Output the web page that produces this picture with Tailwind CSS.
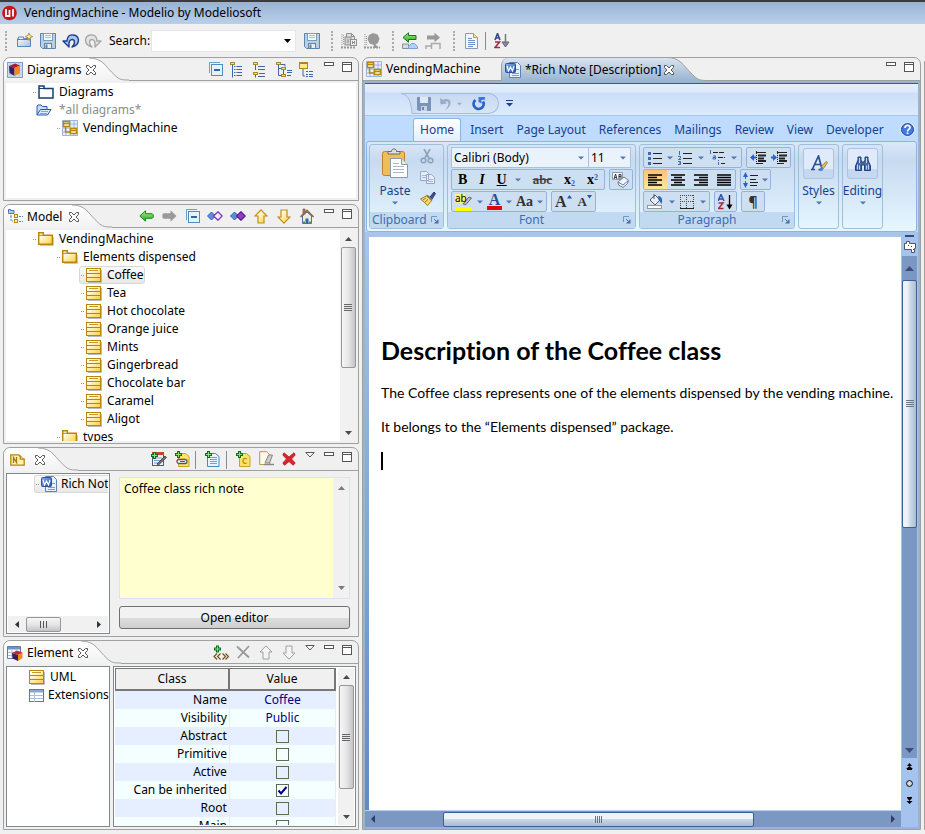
<!DOCTYPE html>
<html lang="en">
<head>
<meta charset="utf-8">
<title>VendingMachine - Modelio by Modeliosoft</title>
<script src="https://cdn.jsdelivr.net/npm/@tailwindcss/browser@4"></script>
</head>
<body class="flex h-screen min-h-[600px] flex-col overflow-hidden bg-[#f0f0f0] font-['Noto_Sans','Open_Sans',sans-serif] text-[12px] leading-[18px] text-black">

<!-- Icon library -->
<svg class="absolute h-0 w-0" aria-hidden="true">
  <defs>
    <linearGradient id="gy" x1="0" y1="0" x2="1" y2="1"><stop offset="0.2" stop-color="#fffdf0"/><stop offset="1" stop-color="#fcd03c"/></linearGradient>
    <linearGradient id="gb" x1="0" y1="0" x2="1" y2="1"><stop offset="0" stop-color="#fff"/><stop offset="1" stop-color="#9fc0ee"/></linearGradient>
    <linearGradient id="gt" x1="0" y1="0" x2="0" y2="1"><stop offset="0" stop-color="#fff"/><stop offset="1" stop-color="#f2f2f2"/></linearGradient>
    <linearGradient id="gtb" x1="0" y1="0" x2="0" y2="1"><stop offset="0" stop-color="#dbe4ef"/><stop offset="1" stop-color="#99b4d1"/></linearGradient>
    <linearGradient id="gg" x1="0" y1="0" x2="0" y2="1"><stop offset="0" stop-color="#a8f08a"/><stop offset="1" stop-color="#22a822"/></linearGradient>
    <linearGradient id="gw" x1="0" y1="0" x2="1" y2="1"><stop offset="0" stop-color="#8ab4f0"/><stop offset="1" stop-color="#1e4fa8"/></linearGradient>
  </defs>
  <symbol id="i-close" viewBox="0 0 12 12"><path d="M1.5 1.500h2L6 4l2.500-2.500h2v2L8 6l2.500 2.500v2h-2L6 8l-2.500 2.500h-2v-2L4 6 1.500 3.500z" fill="#fff" stroke="#555" stroke-width="1"/></symbol>
  <symbol id="i-new" viewBox="0 0 16 16"><path d="M.5 13.500V5.500h1V4h5v1.500h7v8z" fill="url(#gb)" stroke="#5b84b8"/><path d="M1 6.500h12" stroke="#5b84b8"/><path d="M12 0l1 2.500L15.800 3.600 13 4.700 12 7.500l-1-2.800-2.700-1.100L11 2.500z" fill="#fff8c0" stroke="#c09018"/></symbol>
  <symbol id="i-save" viewBox="0 0 16 16"><path d="M.5.500h15v15H2.500l-2-2z" fill="#b9cfe6" stroke="#5f84ad"/><rect x="3.500" y=".5" width="9" height="7" fill="#f4f8f4" stroke="#7b9cc0"/><path d="M5 2.500h6M5 4.500h6" stroke="#b8c8b0"/><rect x="4.500" y="10.500" width="7" height="5" fill="#eee" stroke="#5f84ad"/><rect x="5.500" y="11.500" width="2" height="3.500" fill="#5f84ad"/></symbol>
  <symbol id="i-undo" viewBox="0 0 18 16"><path d="M1 8l6 6v-3.500C7 6 12 5 12.500 9c.2 2-.8 3.500-2.500 5 4-1 6.500-3.500 6.500-7C16 1 7 0 5.500 5.500L5 8z" fill="#a9c6f2" stroke="#1f3f8f" stroke-width="1.400" stroke-linejoin="round"/></symbol>
  <symbol id="i-redo" viewBox="0 0 18 16"><path d="M17 8l-6 6v-3.500C11 6 6 5 5.500 9c-.2 2 .8 3.500 2.500 5-4-1-6.500-3.500-6.500-7C2 1 11 0 12.500 5.500L13 8z" fill="#e4e4e4" stroke="#a8a8a8" stroke-width="1.400" stroke-linejoin="round"/></symbol>
  <symbol id="i-impact" viewBox="0 0 16 16"><path d="M1 1v14M2.500 2v10" stroke="#999" stroke-dasharray="1 1"/><path d="M0 14.500h15" stroke="#999" stroke-width="2" stroke-dasharray="2 1"/><path d="M5.500 4.500V.500h5l3 3v8h-5" fill="#e2e2e2" stroke="#8f8f8f"/><path d="M10.500.500v3h3" fill="none" stroke="#8f8f8f"/><rect x="4" y="4" width="6" height="8" fill="#cfcfcf" stroke="#8f8f8f"/><rect x="9.500" y="6.500" width="6" height="6" fill="#eee" stroke="#8f8f8f"/><path d="M11.500 8v3M13.500 8v3M11.500 9.500h2M6 7h2M6 9h2" stroke="#8f8f8f"/></symbol>
  <symbol id="i-impact2" viewBox="0 0 16 16"><path d="M1 1v14M2.500 3v10" stroke="#999" stroke-dasharray="1 1"/><path d="M0 14.500h16" stroke="#999" stroke-width="2" stroke-dasharray="2 1"/><path d="M9 0l4.500 1.500L15.500 5.500 14 10l-2.500 1.500 3.500 3.500H9l1-3-4.500-1.500L3.500 6 5 2z" fill="#989898"/></symbol>
  <symbol id="i-goleft" viewBox="0 0 16 18"><path d="M1 5.500L6.500.800v2.700H14v4H6.500v2.700z" fill="url(#gg)" stroke="#0b7a1b"/><path d="M.5 16.500v-4.500h6v4.500z" fill="#d9d9d9" stroke="#8a9099"/><path d="M6.500 16.500v-2l3-3h3l3 3v2z" fill="#b5d0fa" stroke="#7d9fd0"/></symbol>
  <symbol id="i-goright" viewBox="0 0 16 18"><path d="M15 5.500L9.500.800v2.700H2v4h7.500v2.700z" fill="#999"/><path d="M1 17v-3h5.500M6.500 17v-5.500h8.500V17" fill="none" stroke="#aaa" stroke-width="1.500"/></symbol>
  <symbol id="i-doc" viewBox="0 0 13 16"><path d="M.5.500h8l4 4v11H.5z" fill="#f2f7ff" stroke="#8a99b5"/><path d="M8.500.500v4h4" fill="#f5dd90" stroke="#b39a50"/><path d="M3 5.500h4M3 7.500h7M3 9.500h7M3 11.500h7M3 13.500h5" stroke="#6d93cc"/></symbol>
  <symbol id="i-az" viewBox="0 0 16 16"><path d="M1 7L3.500.500 6 7M2 5h3" fill="none" stroke="#39488f" stroke-width="1.600"/><path d="M1 9h4.500L1 14.500h5" fill="none" stroke="#a02848" stroke-width="1.600"/><path d="M11.500 1v8" stroke="#777" stroke-width="1.500"/><path d="M8 9h7l-3.500 5z" fill="#8d86a8" stroke="#666"/></symbol>
  <symbol id="i-cube" viewBox="0 0 16 16"><path d="M.5.500h15v15H.5z" fill="#cfdcf2" stroke="#7d99c4"/><path d="M0 4h16M0 8h16M0 12h16M4 0v16M8 0v16M12 0v16" stroke="#a6bbdd" stroke-width=".7"/><path d="M2 4l6-2.500 5 2L7.500 6z" fill="#b01c2c"/><path d="M2 4l5.500 2v8L2.500 11z" fill="#3b1d5c"/><path d="M7.500 6L13 3.500V11l-5.500 3z" fill="#f08a20"/></symbol>
  <symbol id="i-element" viewBox="0 0 16 16"><path d="M.5 1.500h13v12H.5z" fill="#fff" stroke="#5c7aa5"/><path d="M1 2h12v2.500H1z" fill="#6f93c8"/><path d="M1 7.500h12M1 10.500h12M5 4v9M9 4v9" stroke="#a9bfdf"/><path d="M5 8l5-2.500 5.500 2L11 10z" fill="#c02838"/><path d="M5 8l6 2v6l-5.500-2.500z" fill="#3b1d5c"/><path d="M11 10l4.500-2.500v5.500L11 16z" fill="#f08a20"/></symbol>
  <symbol id="i-collapse" viewBox="0 0 14 14"><path d="M.5 11V.500H11" fill="none" stroke="#6a9fc8"/><rect x="2.500" y="2.500" width="11" height="11" fill="#e4f2fb" stroke="#4f8dbd"/><path d="M5 8h6" stroke="#123f80" stroke-width="1.600"/></symbol>
  <symbol id="i-t1" viewBox="0 0 14 16"><rect x=".5" y=".5" width="4" height="2" fill="#fbe36a" stroke="#a98a20"/><path d="M2.500 3v12.500" stroke="#3f66a8"/><path d="M4 4.500h1.500M4 7.500h1.500M4 10.500h1.500M4 13.500h1.500M6.500 4.500H12M6.500 7.500H12M6.500 10.500H12M6.500 13.500H12" stroke="#3f66a8"/></symbol>
  <symbol id="i-t2" viewBox="0 0 14 16"><rect x=".5" y=".5" width="4" height="2" fill="#fbe36a" stroke="#a98a20"/><rect x=".5" y="10.500" width="4" height="2" fill="#fbe36a" stroke="#a98a20"/><path d="M5 4.500h7M5 7.500h7M5 14.500h7M2.500 3v5M2.500 13v2.500M6 11.500h6" stroke="#3f66a8"/></symbol>
  <symbol id="i-t3" viewBox="0 0 16 16"><rect x=".5" y=".5" width="4" height="2" fill="#fbe36a" stroke="#a98a20"/><rect x="5.500" y="5.500" width="4" height="2" fill="#fbe36a" stroke="#a98a20"/><rect x="5.500" y="12.500" width="4" height="2" fill="#fbe36a" stroke="#a98a20"/><path d="M2.500 3v10.500h3M3 6.500h2M5 2.500h4v2M7.500 8v4M11 8.500h5M11 10.500h5M11 13.500h4" stroke="#3f66a8" fill="none"/></symbol>
  <symbol id="i-t4" viewBox="0 0 15 16"><rect x=".5" y=".5" width="8" height="6" fill="#fdea8a" stroke="#a98a20"/><path d="M1 1.500h8" stroke="#6a86c0"/><path d="M4 7v7h2M7 9.500h2M10 9.500h4M7 12.500h2M10 12.500h4M7 14.500h2M10 14.500h4" stroke="#3f66a8" fill="none"/></symbol>
  <symbol id="i-min" viewBox="0 0 10 10"><rect x=".5" y=".5" width="9" height="3" fill="#fff" stroke="#555"/></symbol>
  <symbol id="i-max" viewBox="0 0 10 10"><rect x=".5" y=".5" width="9" height="9" fill="#fff" stroke="#555"/><path d="M0 2.500h10" stroke="#555"/></symbol>
  <symbol id="i-menu" viewBox="0 0 10 10"><path d="M.8.500h8.400L5 5z" fill="#fff" stroke="#555"/></symbol>
  <symbol id="i-pkgw" viewBox="0 0 16 14"><path d="M1 13V1h5v2.500h9V13z" fill="#fff" stroke="#124070" stroke-width="1.500"/><path d="M1 3.500h5" stroke="#124070"/></symbol>
  <symbol id="i-open" viewBox="0 0 16 12"><path d="M1 11V2l1-1h3l1.500 1.500H11V5" fill="#c9dcf8" stroke="#2a57b5"/><path d="M1 11l3.500-5.500H15L11.500 11z" fill="#dceafd" stroke="#2a57b5"/><path d="M5 7.500h7M4 9.500h7" stroke="#7fa3e0"/></symbol>
  <symbol id="i-pkg" viewBox="0 0 16 14"><path d="M2 13.500h13.500V5" stroke="#c9c9c9" fill="none"/><path d="M.7 12.300V.700h4.600v2.600h9v9z" fill="url(#gy)" stroke="#b8860b" stroke-width="1.400"/><path d="M1 3.300h4.500" stroke="#b8860b"/></symbol>
  <symbol id="i-class" viewBox="0 0 16 15"><path d="M2 14.500h13.500V2" stroke="#bbb" fill="none"/><rect x=".5" y=".5" width="14" height="13" fill="url(#gy)" stroke="#b8860b"/><path d="M1 5.500h13M1 9.500h13" stroke="#b8860b"/><path d="M3 2.500h9" stroke="#c99a2a"/></symbol>
  <symbol id="i-diag" viewBox="0 0 16 16"><path d="M0 0h16v16H0z" fill="#e9effa"/><path d="M.5.500h15v15H.5zM4 0v16M8 0v16M12 0v16M0 4h16M0 8h16M0 12h16" fill="none" stroke="#9fb4dc"/><rect x="1.500" y="1.500" width="6" height="5" fill="#fff6cf" stroke="#b8860b" stroke-width="1.400"/><rect x="8.500" y="8.500" width="6" height="5" fill="#fff6cf" stroke="#b8860b" stroke-width="1.400"/><path d="M1.500 3.500h6M8.500 10.500h6M3.500 7v5H8" fill="none" stroke="#b8860b" stroke-width="1.300"/></symbol>
  <symbol id="i-model" viewBox="0 0 16 15"><path d="M.5 3.500V.500h2V1.500H6v3H.5z" fill="#b7cdf0" stroke="#4c6fae"/><path d="M3 6v1.500" stroke="#888"/><rect x="6.500" y="5.500" width="3" height="3" fill="#fff3b0" stroke="#b8860b"/><rect x="6.500" y="10.500" width="3" height="3" fill="#fff3b0" stroke="#b8860b"/><path d="M3 7v5h2M11 7.500h4M11 12.500h4" stroke="#6680b0" stroke-dasharray="2 1" fill="none"/></symbol>
  <symbol id="i-left" viewBox="0 0 15 12"><path d="M.8 6L6.500.800v2.900h6.700l1 1v2.600l-1 1H6.500v2.900z" fill="url(#gg)" stroke="#168a1e"/></symbol>
  <symbol id="i-right" viewBox="0 0 15 12"><path d="M14.500 6L8.500.300v3H1.500l-1 1v3.400l1 1h7v3z" fill="#9a9a9a"/></symbol>
  <symbol id="i-dia1" viewBox="0 0 16 10"><path d="M.5 5L4.500 1l4 4-4 4z" fill="#5a8fdb" stroke="#3560b0"/><path d="M6.500 5L11 .8 15.200 5 11 9.200z" fill="#f3e8ff" stroke="#7a35b0" stroke-width="1.300"/></symbol>
  <symbol id="i-dia2" viewBox="0 0 16 10"><path d="M.5 5L4.500 1l4 4-4 4z" fill="#5a8fdb" stroke="#3560b0"/><path d="M6.500 5L11 .8 15.200 5 11 9.200z" fill="#8f3fc0" stroke="#5a2090" stroke-width="1.300"/></symbol>
  <symbol id="i-up" viewBox="0 0 14 15"><path d="M7 .8L13 7h-3v7H4V7H1z" fill="url(#gy)" stroke="#c68a12" stroke-width="1.200"/></symbol>
  <symbol id="i-down" viewBox="0 0 14 15"><path d="M7 14.200L13 8h-3V1H4v7H1z" fill="url(#gy)" stroke="#c68a12" stroke-width="1.200"/></symbol>
  <symbol id="i-upg" viewBox="0 0 14 15"><path d="M7 .8L13 7h-3v7H4V7H1z" fill="#f4f4f4" stroke="#a0a0a0"/></symbol>
  <symbol id="i-downg" viewBox="0 0 14 15"><path d="M7 14.200L13 8h-3V1H4v7H1z" fill="#f4f4f4" stroke="#a0a0a0"/></symbol>
  <symbol id="i-home" viewBox="0 0 14 16"><path d="M3 6V1h2v3" fill="#c9765a" stroke="#8a4a38" stroke-width=".7"/><path d="M2.500 8v7.500h9V8L7 4z" fill="#e9f0dc" stroke="#5b6f9a"/><path d="M.5 9L7 2.500 13.500 9" fill="none" stroke="#8a6a50" stroke-width="1.600"/><rect x="5.500" y="10.500" width="3" height="5" fill="#3b62b0"/><path d="M3 14.500h2M9 14.500h2" stroke="#3fa040" stroke-width="2"/></symbol>
  <symbol id="i-note" viewBox="0 0 15 12"><path d="M.8 11.200V.800h8l1.500 2v2.400h3.900v6z" fill="#fdf0b0" stroke="#b8860b" stroke-width="1.300"/><path d="M3.500 9V3.500l3 5V3" fill="none" stroke="#a87808" stroke-width="1.300"/><path d="M9.500 1l4.500 4.500" stroke="#b8860b"/></symbol>
  <symbol id="i-n1" viewBox="0 0 16 16"><rect x="1.500" y="1.500" width="11" height="13" fill="#eef3fb" stroke="#445e90"/><path d="M1 1h12v3H1z" fill="#d04030"/><path d="M3 7h8M3 9.500h7M3 12h4" stroke="#7f98c8"/><path d="M6 13l8-8 1.500 1.500-8 7.500z" fill="#777" stroke="#222" stroke-width=".7"/><path d="M3.500 1v7M0 4.500h7" stroke="#0d6b22" stroke-width="3"/><path d="M3.500 2v5M1 4.500h5" stroke="#8be070" stroke-width="1"/></symbol>
  <symbol id="i-n2" viewBox="0 0 15 16"><path d="M3.500 2.500h7l3.500 3v10H3.500z" fill="#fbe36a" stroke="#c9a020"/><rect x="2" y="8.500" width="10" height="4" rx="2" fill="#fff" stroke="#555" stroke-width="1.300"/><path d="M5 10.500h5" stroke="#555"/><path d="M3.500 0v7M0 3.500h7" stroke="#0d6b22" stroke-width="3"/><path d="M3.500 1v5M1 3.500h5" stroke="#8be070"/></symbol>
  <symbol id="i-n3" viewBox="0 0 15 16"><path d="M2.500 2.500h8l3.500 3v10H2.500z" fill="#eaf4ff" stroke="#3f8cc8"/><path d="M5 6.500h7M5 8.500h7M5 10.500h7M5 12.500h7" stroke="#6f9fd8"/><path d="M3.500 0v7M0 3.500h7" stroke="#0d6b22" stroke-width="3"/><path d="M3.500 1v5M1 3.500h5" stroke="#8be070"/></symbol>
  <symbol id="i-n4" viewBox="0 0 15 16"><path d="M3.500 2.500h7l3.500 3v10H3.500z" fill="#fbe36a" stroke="#c9a020"/><path d="M11 8c-3-1.500-4 0-4 2s1.500 3 4 2" fill="none" stroke="#c08a10" stroke-width="1.300"/><path d="M3.500 0v7M0 3.500h7" stroke="#0d6b22" stroke-width="3"/><path d="M3.500 1v5M1 3.500h5" stroke="#8be070"/></symbol>
  <symbol id="i-n5" viewBox="0 0 16 15"><path d="M.7 13.500V.700h7l3 3V13.500z" fill="#fffbe8" stroke="#b8964a"/><path d="M6 12l3.500-8h4L10.500 12z" fill="#ccc" stroke="#888"/><path d="M5 13.500h10" stroke="#888" stroke-width="1.500"/></symbol>
  <symbol id="i-del" viewBox="0 0 14 14"><path d="M2 .8L7 5l5-4.200L13.200 3 9.500 7l3.700 4-2 2.200L7 9.500l-4.500 3.700L.8 11l3.700-4L.8 3z" fill="#e0242c" stroke="#b01018" stroke-width=".8"/></symbol>
  <symbol id="i-delg" viewBox="0 0 14 14"><path d="M1 1.500l12 11M13 1L2 13" stroke="#999" stroke-width="1.800" fill="none"/></symbol>
  <symbol id="i-stereo" viewBox="0 0 16 16"><path d="M4.500.500v7M1 4h7" stroke="#0d6b22" stroke-width="3"/><path d="M4.500 1.500v5M2 4h5" stroke="#8be070"/><path d="M4 8.500l-3 3 3 3M7.500 8.500l-3 3 3 3M9.500 8.500l3 3-3 3M12.500 8.500l3 3-3 3" fill="none" stroke="#6d4a12" stroke-width="1.100"/></symbol>
  <symbol id="i-word" viewBox="0 0 16 16"><path d="M4.500.500h8l3 3v12h-11z" fill="#e8f0fb" stroke="#5f7fb5"/><path d="M7 11.500h7M7 13.500h7M11 7.500h3" stroke="#7d9fd6"/><rect x=".5" y="1.500" width="10" height="9" rx="1" fill="url(#gw)" stroke="#2a4f9c"/><path d="M2 4l1.500 5 2-4 2 4L9 4" fill="none" stroke="#fff" stroke-width="1.200"/></symbol>
  <symbol id="i-table" viewBox="0 0 15 13"><rect x=".5" y=".5" width="14" height="12" fill="#fff" stroke="#5c7aa5"/><path d="M1 1h13v2.500H1z" fill="#8aa6d2"/><path d="M1 6.500h13M1 9.500h13M5.500 3v10" stroke="#a9bfdf"/></symbol>
  <symbol id="i-qsave" viewBox="0 0 14 14"><path d="M0 0h14v14H1.500L0 12.500z" fill="#7b93b8"/><rect x="3" y="0" width="8" height="6" fill="#dfe8f4"/><rect x="4" y="9" width="6" height="5" fill="#c8d4e6"/><rect x="5" y="10" width="2" height="3" fill="#6d86ae"/></symbol>
  <symbol id="i-qundo" viewBox="0 0 14 14"><path d="M1 1l.5 6.500L8 6.500 6 4.800C10 3 11 8 6 13c7-3.500 8-12 0-11L4 3z" fill="#98acca"/></symbol>
  <symbol id="i-qredo" viewBox="0 0 14 14"><path d="M3.500 3A5 5 0 1 0 11 4.500" fill="none" stroke="#2a63c8" stroke-width="2.800"/><path d="M6.500 0H13v2.500L9.500 3v3.500L6.500 5z" fill="#3b78dd"/></symbol>
  <symbol id="i-dd" viewBox="0 0 6 4"><path d="M0 .5h6L3 3.500z" fill="#5278b0"/></symbol>
  <symbol id="i-paste" viewBox="0 0 26 31"><rect x=".5" y="3.500" width="22" height="24" rx="2" fill="#f0bd5a" stroke="#bb8230"/><path d="M6 6V3.500h3.500C9.500 0 14.500 0 14.500 3.500H18V6z" fill="#ddd" stroke="#6b6b6b"/><path d="M8.500 10.500h11l6 6v13h-17z" fill="#fff" stroke="#8a98b0"/><path d="M19.500 10.500v6h6" fill="#e3e9f3" stroke="#8a98b0"/><path d="M11 15.500h6M11 18.500h11M11 21.500h11M11 24.500h11" stroke="#a9b6cc"/></symbol>
  <symbol id="i-cut" viewBox="0 0 14 15"><path d="M4 0l5 9M10 0L5 9" stroke="#8ea0bb" stroke-width="1.600"/><circle cx="3.500" cy="11.500" r="2.300" fill="none" stroke="#8ea0bb" stroke-width="1.500"/><circle cx="10.500" cy="11.500" r="2.300" fill="none" stroke="#8ea0bb" stroke-width="1.500"/></symbol>
  <symbol id="i-copy" viewBox="0 0 15 13"><path d="M.5.500h6l2 2v7h-8zM6.500 3.500h5l3 3v6h-8z" fill="#e6edf7" stroke="#98a9c6"/><path d="M2 4.500h4M2 6.500h4M8 8.500h5M8 10.500h5" stroke="#a9b8d0"/></symbol>
  <symbol id="i-brush" viewBox="0 0 16 15"><path d="M10 6l4-5 1.500 1.500L12 8z" fill="#40508c" stroke="#2c3970"/><path d="M.5 8L7 4.500l5 4.500-4.500 5.500C5 12 3 10 .5 8z" fill="#fbd96a" stroke="#9c7a28"/><path d="M3 9l3-2M5 11l3-2.500" stroke="#9c7a28"/><path d="M7 4.500l5 4.500" stroke="#777" stroke-width="2"/></symbol>
  <symbol id="i-launch" viewBox="0 0 8 8"><path d="M.5 6V.500H6" fill="none" stroke="#6f94c8"/><path d="M3 3l3 3" stroke="#4a6ea8"/><path d="M7.500 3v4.500H3z" fill="#4a6ea8"/></symbol>
  <symbol id="i-bul" viewBox="0 0 14 14"><path d="M0 1h3v3H0zM0 6h3v3H0zM0 11h3v3H0z" fill="#4269b0"/><path d="M5 2.500h9M5 7.500h9M5 12.500h9" stroke="#222"/></symbol>
  <symbol id="i-num" viewBox="0 0 14 14"><path d="M1.500 0v4M0 5.500h2.500v1.500L.5 8.500H3M0 10.500h2.500v3H0M1 12h1.500" stroke="#4269b0" fill="none"/><path d="M5 2.500h9M5 7.500h9M5 12.500h9" stroke="#222"/></symbol>
  <symbol id="i-multi" viewBox="0 0 17 15"><path d="M1.500 0v4M4 6h2.500v3H4V7.500h2.500M9.500 12v3M9.500 10v1" stroke="#4269b0" fill="none"/><path d="M4 2.500h12M9 7.500h7M12 13.500h4" stroke="#222" stroke-dasharray="5 1"/></symbol>
  <symbol id="i-outd" viewBox="0 0 16 14"><path d="M6.500 0v14" stroke="#222" stroke-dasharray="1 1"/><path d="M6 1.500h10M6 12.500h7" stroke="#222"/><path d="M8 4.500h8M8 7.500h6M8 10h8" stroke="#222" stroke-width="2"/><path d="M6 6.500H3" stroke="#2a60c8" stroke-width="2"/><path d="M4 3v7L0 6.500z" fill="#2a60c8"/></symbol>
  <symbol id="i-ind" viewBox="0 0 16 14"><path d="M6.500 0v14" stroke="#222" stroke-dasharray="1 1"/><path d="M6 1.500h10M6 12.500h7" stroke="#222"/><path d="M8 4.500h8M8 7.500h6M8 10h8" stroke="#222" stroke-width="2"/><path d="M0 6.500h3" stroke="#2a60c8" stroke-width="2"/><path d="M2 3v7l4-3.500z" fill="#2a60c8"/></symbol>
  <symbol id="i-al" viewBox="0 0 14 12"><path d="M0 1h14M0 3.500h9M0 6h14M0 8.500h9M0 11h14" stroke="#000" stroke-width="1.300"/></symbol>
  <symbol id="i-ac" viewBox="0 0 14 12"><path d="M0 1h14M3 3.500h8M0 6h14M3 8.500h8M0 11h14" stroke="#000" stroke-width="1.300"/></symbol>
  <symbol id="i-ar" viewBox="0 0 14 12"><path d="M0 1h14M5 3.500h9M0 6h14M5 8.500h9M0 11h14" stroke="#000" stroke-width="1.300"/></symbol>
  <symbol id="i-aj" viewBox="0 0 14 12"><path d="M0 1h14M0 3.500h14M0 6h14M0 8.500h14M0 11h14" stroke="#000" stroke-width="1.300"/></symbol>
  <symbol id="i-ls" viewBox="0 0 15 16"><path d="M2.500 3v10" stroke="#2a60c8" stroke-dasharray="4 2"/><path d="M0 5L2.500 0 5 5zM0 11l2.500 5L5 11z" fill="#2a60c8"/><path d="M7 3.500h8M7 7.500h6M7 10.500h8M7 13.500h7" stroke="#222"/></symbol>
  <symbol id="i-fill" viewBox="0 0 16 15"><path d="M3 6l5-5 5 5-5 5z" fill="#e8eef8" stroke="#555f78"/><path d="M7 0v5" stroke="#555"/><path d="M11 2c4 0 5 4 3.500 8-1-1-1.500-3-3-4z" fill="#2f66b8"/><rect x=".5" y="11.500" width="14" height="3" fill="#fff" stroke="#999"/></symbol>
  <symbol id="i-border" viewBox="0 0 14 14"><path d="M.5 0v13M6.500 0v13M13.500 0v13M0 .5h14M0 6.500h14" stroke="#444" stroke-dasharray="1 1"/><path d="M0 13.500h14" stroke="#222"/></symbol>
  <symbol id="i-sort" viewBox="0 0 15 16"><path d="M0 7L3 .5 6 7M1 5h4" fill="none" stroke="#2a4fa8" stroke-width="1.500"/><path d="M.5 9H5L.5 14.500h5" fill="none" stroke="#a82838" stroke-width="1.500"/><path d="M11.500 1v12" stroke="#000" stroke-width="1.300"/><path d="M8.500 10.500h6l-3 5z"/></symbol>
  <symbol id="i-eraser" viewBox="0 0 18 17"><path d="M.5 1.500h10v7H.5z" fill="#fff" stroke="#8a98b0"/><path d="M2 8l1.500-5L5 8M2.500 6.500h2M7 8V3.500h2V8M7 5.500h2" stroke="#333" fill="none"/><path d="M6 11l6-5 4.500 3.500-1 3-4.500 4L6.500 14z" fill="#f1f4fa" stroke="#6d7f9f"/><path d="M6 11l5 3 5.500-4.500" stroke="#6d7f9f" fill="none"/></symbol>
  <symbol id="i-hl" viewBox="0 0 18 18"><path d="M0 1h10v9H0z" fill="#fdf57a"/><path d="M8 11l6-7 2.500 1L11 11.500z" fill="#b8bcc8" stroke="#667"/><path d="M0 14h17v4H0z" fill="#ff0"/></symbol>
  <symbol id="i-styles" viewBox="0 0 18 17"><path d="M1 14.500h4M8.500 14.500h4M2.500 14L8.500 1l3.500 13M5 9.500h6" stroke="#2c4f94" stroke-width="1.700" fill="none"/><path d="M11 12l5-5.500 1.500 1-4 6z" fill="#e9b95a" stroke="#8c6a2a" stroke-width=".7"/><path d="M9 16c0-3 2-4 4-3 1 2-1 3.500-4 3z" fill="#4c87dd"/></symbol>
  <symbol id="i-bino" viewBox="0 0 16 15"><path d="M3 1h3v3l1 2h2l1-2V1h3v3l2.500 6v4.500h-6V9H6.500v5.500h-6V10L3 4z" fill="#4468a8" stroke="#23427c"/><path d="M2.500 8.500v5M4.500 2v5M4.500 9.500v4M11.500 2v5M11.500 9.500v4M13.500 8.500v5" stroke="#c4d6f2"/></symbol>
  <symbol id="i-help" viewBox="0 0 15 15"><circle cx="7.500" cy="7.500" r="6.800" fill="#3f7be0" stroke="#dce9fb" stroke-width="1.400"/><circle cx="7.500" cy="7.500" r="6" fill="none" stroke="#2048a0"/><path d="M5 6c0-3.500 5-3.500 5-.5 0 2-2.500 1.800-2.500 4" stroke="#fff" stroke-width="1.700" fill="none"/><path d="M6.700 10.500h1.700v1.700H6.700z" fill="#fff"/></symbol>
  <symbol id="i-au" viewBox="0 0 7 4"><path d="M0 4l3.500-4L7 4z" fill="#4a4a4a"/></symbol>
  <symbol id="i-ad" viewBox="0 0 7 4"><path d="M0 0h7L3.500 4z" fill="#4a4a4a"/></symbol>
  <symbol id="c-w" viewBox="0 0 40 23"><path d="M0 .5C13 .5 16 8 23 15s8 7.500 17 7.500V23H0z" fill="url(#gt)"/><path d="M0 .5C13 .5 16 8 23 15s8 7.500 17 7.500" fill="none" stroke="#a0a0a0"/></symbol>
</svg>

<header class="flex h-6 shrink-0 items-center border-t-2 border-[#3c3c3c] bg-linear-to-b from-[#98b3d2] to-[#b9d0ea] px-0.5">
  <svg class="size-4 shrink-0" viewBox="0 0 16 16"><circle cx="7.500" cy="8" r="7.300" fill="#c8141c"/><path d="M4 4v7h3.500V5M11 4v7.500" stroke="#fff" stroke-width="1.800" fill="none"/></svg>
  <h1 class="pl-1.5">VendingMachine - Modelio by Modeliosoft</h1>
</header>

<div class="flex h-[33px] shrink-0 items-center pl-[5px]" role="toolbar" aria-label="Main">
  <span class="mr-2.5 h-5 border-l-2 border-dotted border-[#aaa]"></span>
  <button aria-label="New" class="mr-[7px]"><svg class="size-4"><use href="#i-new"/></svg></button>
  <button aria-label="Save" class="mr-1.5"><svg class="size-4"><use href="#i-save"/></svg></button>
  <button aria-label="Undo" class="mr-1"><svg class="h-4 w-[18px]"><use href="#i-undo"/></svg></button>
  <button aria-label="Redo" class="mr-[7px]"><svg class="h-4 w-[18px]"><use href="#i-redo"/></svg></button>
  <label for="search" class="w-10 whitespace-nowrap">Search:</label>
  <div class="mr-2 ml-0.5 flex h-[22px] w-[145px] items-center border border-[#e3e6ea] bg-white">
    <input id="search" type="text" class="h-full min-w-0 flex-1 px-1 outline-none">
    <button aria-label="Search history" class="px-1"><svg class="h-1 w-[7px]" viewBox="0 0 7 4"><path d="M0 0h7L3.500 4z"/></svg></button>
  </div>
  <button aria-label="Save search" class="mr-[11px]"><svg class="size-4"><use href="#i-save"/></svg></button>
  <span class="mr-2 h-5 border-l-2 border-dotted border-[#aaa]"></span>
  <button aria-label="Impact" class="mr-[7px]"><svg class="size-4"><use href="#i-impact"/></svg></button>
  <button aria-label="Impact graph" class="mr-3"><svg class="size-4"><use href="#i-impact2"/></svg></button>
  <span class="mr-2 h-5 border-l-2 border-dotted border-[#aaa]"></span>
  <button aria-label="Previous" class="mr-[7px]"><svg class="h-[18px] w-4"><use href="#i-goleft"/></svg></button>
  <button aria-label="Next" class="mr-3"><svg class="h-[18px] w-4"><use href="#i-goright"/></svg></button>
  <span class="mr-2.5 h-5 border-l-2 border-dotted border-[#aaa]"></span>
  <button aria-label="Document" class="mr-[7px]"><svg class="h-4 w-[13px]"><use href="#i-doc"/></svg></button>
  <span class="mr-2 h-[18px] border-l border-[#8c8c8c]"></span>
  <button aria-label="Sort"><svg class="size-4"><use href="#i-az"/></svg></button>
</div>

<div class="flex min-h-0 flex-1 pb-1 pl-[3px]">
<main class="grid min-h-0 flex-1 grid-cols-[minmax(340px,356fr)_559fr] gap-[3px]">

  <!-- Left views -->
  <div class="grid min-h-0 grid-rows-[144fr_240fr_190fr_190fr] gap-[3px]">

    <section class="flex min-h-0 flex-col rounded-t-[7px] border border-[#a0a0a0]">
      <header class="flex h-[23px] shrink-0">
        <div class="flex items-center rounded-tl-[7px] bg-linear-to-b from-white to-[#f2f2f2] pl-[3px]">
          <svg class="size-4"><use href="#i-cube"/></svg>
          <h2 class="w-[62px] pl-1">Diagrams</h2>
          <button aria-label="Close Diagrams" class="relative z-10"><svg class="size-3"><use href="#i-close"/></svg></button>
        </div>
        <svg class="-mt-px -ml-2 h-6 w-10 shrink-0" preserveAspectRatio="none"><use href="#c-w"/></svg>
        <div class="flex flex-1 items-start justify-end border-b border-[#a0a0a0] pt-1 pr-1.5">
          <button aria-label="Collapse all" class="mr-[7px]"><svg class="size-[14px]"><use href="#i-collapse"/></svg></button>
          <button aria-label="Flat" class="mr-[9px]"><svg class="h-4 w-[14px]"><use href="#i-t1"/></svg></button>
          <button aria-label="By type" class="mr-[9px]"><svg class="h-4 w-[14px]"><use href="#i-t2"/></svg></button>
          <button aria-label="By context" class="mr-[7px]"><svg class="size-4"><use href="#i-t3"/></svg></button>
          <button aria-label="By set" class="mr-2.5"><svg class="h-4 w-[15px]"><use href="#i-t4"/></svg></button>
          <button aria-label="Minimize" class="mr-2"><svg class="size-2.5"><use href="#i-min"/></svg></button>
          <button aria-label="Maximize"><svg class="size-2.5"><use href="#i-max"/></svg></button>
        </div>
      </header>
      <ul class="m-0.5 min-h-0 flex-1 overflow-hidden bg-white">
        <li class="flex h-[18px] items-center pl-[27px]"><span class="mr-0.5 w-[3px] border-t border-dotted border-[#999]"></span><svg class="h-[14px] w-4"><use href="#i-pkgw"/></svg><span class="pl-[5px]">Diagrams</span></li>
        <li class="flex h-[18px] items-center pl-[30px] text-[#8c8c8c]"><svg class="h-3 w-4"><use href="#i-open"/></svg><span class="pl-[7px]">*all diagrams*</span></li>
        <li class="flex h-[18px] items-center pl-[51px]"><span class="mr-0.5 w-[3px] border-t border-dotted border-[#999]"></span><svg class="size-4"><use href="#i-diag"/></svg><span class="pl-[5px]">VendingMachine</span></li>
      </ul>
    </section>

    <section class="flex min-h-0 flex-col rounded-t-[7px] border border-[#a0a0a0]">
      <header class="flex h-[23px] shrink-0">
        <div class="flex items-center rounded-tl-[7px] bg-linear-to-b from-white to-[#f2f2f2] pl-1">
          <svg class="h-[15px] w-4"><use href="#i-model"/></svg>
          <h2 class="w-11 pl-[3px]">Model</h2>
          <button aria-label="Close Model" class="relative z-10"><svg class="size-3"><use href="#i-close"/></svg></button>
        </div>
        <svg class="-mt-px -ml-2 h-6 w-10 shrink-0" preserveAspectRatio="none"><use href="#c-w"/></svg>
        <div class="flex flex-1 items-start justify-end border-b border-[#a0a0a0] pt-1 pr-1.5">
          <button aria-label="Back" class="mt-px mr-2"><svg class="h-3 w-[15px]"><use href="#i-left"/></svg></button>
          <button aria-label="Forward" class="mt-px mr-[9px]"><svg class="h-3 w-[15px]"><use href="#i-right"/></svg></button>
          <button aria-label="Collapse all" class="mr-[7px]"><svg class="size-[14px]"><use href="#i-collapse"/></svg></button>
          <button aria-label="Related" class="mt-0.5 mr-[7px]"><svg class="h-2.5 w-4"><use href="#i-dia1"/></svg></button>
          <button aria-label="Related all" class="mt-0.5 mr-2"><svg class="h-2.5 w-4"><use href="#i-dia2"/></svg></button>
          <button aria-label="Up" class="mr-[9px]"><svg class="h-[15px] w-[14px]"><use href="#i-up"/></svg></button>
          <button aria-label="Down" class="mr-[9px]"><svg class="h-[15px] w-[14px]"><use href="#i-down"/></svg></button>
          <button aria-label="Home" class="-mt-px mr-2.5"><svg class="h-4 w-[14px]"><use href="#i-home"/></svg></button>
          <button aria-label="Minimize" class="mr-2"><svg class="size-2.5"><use href="#i-min"/></svg></button>
          <button aria-label="Maximize"><svg class="size-2.5"><use href="#i-max"/></svg></button>
        </div>
      </header>
      <div class="m-0.5 flex min-h-0 flex-1 bg-white">
        <ul class="min-h-0 flex-1 overflow-hidden">
          <li class="flex h-[18px] items-center pl-[27px]"><span class="mr-0.5 w-[3px] border-t border-dotted border-[#999]"></span><svg class="h-[14px] w-4"><use href="#i-pkg"/></svg><span class="pl-[5px]">VendingMachine</span></li>
          <li class="flex h-[18px] items-center pl-[51px]"><span class="mr-0.5 w-[3px] border-t border-dotted border-[#999]"></span><svg class="h-[14px] w-4"><use href="#i-pkg"/></svg><span class="pl-[5px]">Elements dispensed</span></li>
          <li class="flex pl-[73px]"><div class="flex h-[18px] items-center rounded-[3px] border border-[#d9d9d9] bg-linear-to-b from-[#fafafa] to-[#e8e8e8] pl-px"><span class="mr-0.5 w-[3px] border-t border-dotted border-[#999]"></span><svg class="h-[15px] w-4"><use href="#i-class"/></svg><span class="pl-[5px]">Coffee</span></div></li>
          <li class="flex h-[18px] items-center pl-[75px]"><span class="mr-0.5 w-[3px] border-t border-dotted border-[#999]"></span><svg class="h-[15px] w-4"><use href="#i-class"/></svg><span class="pl-[5px]">Tea</span></li>
          <li class="flex h-[18px] items-center pl-[75px]"><span class="mr-0.5 w-[3px] border-t border-dotted border-[#999]"></span><svg class="h-[15px] w-4"><use href="#i-class"/></svg><span class="pl-[5px]">Hot chocolate</span></li>
          <li class="flex h-[18px] items-center pl-[75px]"><span class="mr-0.5 w-[3px] border-t border-dotted border-[#999]"></span><svg class="h-[15px] w-4"><use href="#i-class"/></svg><span class="pl-[5px]">Orange juice</span></li>
          <li class="flex h-[18px] items-center pl-[75px]"><span class="mr-0.5 w-[3px] border-t border-dotted border-[#999]"></span><svg class="h-[15px] w-4"><use href="#i-class"/></svg><span class="pl-[5px]">Mints</span></li>
          <li class="flex h-[18px] items-center pl-[75px]"><span class="mr-0.5 w-[3px] border-t border-dotted border-[#999]"></span><svg class="h-[15px] w-4"><use href="#i-class"/></svg><span class="pl-[5px]">Gingerbread</span></li>
          <li class="flex h-[18px] items-center pl-[75px]"><span class="mr-0.5 w-[3px] border-t border-dotted border-[#999]"></span><svg class="h-[15px] w-4"><use href="#i-class"/></svg><span class="pl-[5px]">Chocolate bar</span></li>
          <li class="flex h-[18px] items-center pl-[75px]"><span class="mr-0.5 w-[3px] border-t border-dotted border-[#999]"></span><svg class="h-[15px] w-4"><use href="#i-class"/></svg><span class="pl-[5px]">Caramel</span></li>
          <li class="flex h-[18px] items-center pl-[75px]"><span class="mr-0.5 w-[3px] border-t border-dotted border-[#999]"></span><svg class="h-[15px] w-4"><use href="#i-class"/></svg><span class="pl-[5px]">Aligot</span></li>
          <li class="flex h-[18px] items-center pl-[51px]"><span class="mr-0.5 w-[3px] border-t border-dotted border-[#999]"></span><svg class="h-[14px] w-4"><use href="#i-pkg"/></svg><span class="pl-[5px]">types</span></li>
        </ul>
        <div class="flex w-4 flex-col items-center bg-[#f1f1f1]">
          <div class="flex h-[17px] items-center"><svg class="h-1 w-[7px]"><use href="#i-au"/></svg></div>
          <div class="flex w-[15px] flex-[120] items-center justify-center rounded-[2px] border border-[#979797] bg-linear-to-r from-[#f6f6f6] via-[#e6e6e6] to-[#c4c4c8]"><span class="h-[7px] w-2 border-y border-[#666] bg-[linear-gradient(#e6e6e6_1px,#666_1px,#666_2px,#e6e6e6_2px,#e6e6e6_3px,#666_3px,#666_4px,#e6e6e6_4px)]"></span></div>
          <div class="flex-[56]"></div>
          <div class="flex h-[17px] items-center"><svg class="h-1 w-[7px]"><use href="#i-ad"/></svg></div>
        </div>
      </div>
    </section>

    <section class="flex min-h-0 flex-col rounded-t-[7px] border border-[#a0a0a0]">
      <header class="flex h-[23px] shrink-0">
        <div class="flex items-center rounded-tl-[7px] bg-linear-to-b from-white to-[#f2f2f2] pl-1.5">
          <svg class="mr-[9px] h-3 w-[15px]"><use href="#i-note"/></svg>
          <button aria-label="Close Notes" class="relative z-10"><svg class="size-3"><use href="#i-close"/></svg></button>
        </div>
        <svg class="-mt-px -ml-2 h-6 w-10 shrink-0" preserveAspectRatio="none"><use href="#c-w"/></svg>
        <div class="flex flex-1 items-start justify-end border-b border-[#a0a0a0] pt-[3px] pr-1.5">
          <button aria-label="Add note" class="mr-2"><svg class="size-4"><use href="#i-n1"/></svg></button>
          <button aria-label="Add linked note" class="mr-[5px]"><svg class="h-4 w-[15px]"><use href="#i-n2"/></svg></button>
          <span class="mr-[9px] h-[18px] border-l border-[#8c8c8c]"></span>
          <button aria-label="Add document" class="mr-1.5"><svg class="h-4 w-[15px]"><use href="#i-n3"/></svg></button>
          <span class="mr-[9px] h-[18px] border-l border-[#8c8c8c]"></span>
          <button aria-label="Add constraint" class="mr-2"><svg class="h-4 w-[15px]"><use href="#i-n4"/></svg></button>
          <button aria-label="Edit" class="mr-[7px]"><svg class="h-[15px] w-4"><use href="#i-n5"/></svg></button>
          <button aria-label="Delete" class="mr-[9px]"><svg class="mt-px size-[14px]"><use href="#i-del"/></svg></button>
          <button aria-label="View menu" class="mt-px mr-[9px]"><svg class="size-2.5"><use href="#i-menu"/></svg></button>
          <button aria-label="Minimize" class="mt-px mr-2"><svg class="size-2.5"><use href="#i-min"/></svg></button>
          <button aria-label="Maximize" class="mt-px"><svg class="size-2.5"><use href="#i-max"/></svg></button>
        </div>
      </header>
      <div class="flex min-h-0 flex-1 gap-2 p-0.5">
        <div class="flex w-[104px] shrink-0 flex-col border border-[#828790] bg-white p-px">
          <div class="ml-[26px] flex h-[18px] items-center overflow-hidden rounded-l-[3px] border border-r-0 border-[#d9d9d9] bg-linear-to-b from-[#fafafa] to-[#e8e8e8] pl-px whitespace-nowrap"><span class="mr-0.5 w-[3px] shrink-0 border-t border-dotted border-[#999]"></span><svg class="size-4 shrink-0"><use href="#i-word"/></svg><span class="pl-1">Rich Not</span></div>
          <div class="flex-1"></div>
          <div class="flex h-4 items-center bg-[#f1f1f1]">
            <div class="flex w-[18px] justify-center"><svg class="h-[7px] w-1" viewBox="0 0 4 7"><path d="M4 0v7L0 3.500z" fill="#333"/></svg></div>
            <div class="flex h-[15px] flex-[35] items-center justify-center gap-0.5 rounded-[2px] border border-[#979797] bg-linear-to-b from-[#f6f6f6] via-[#e6e6e6] to-[#c4c4c8]"><span class="h-[7px] w-px bg-[#555]"></span><span class="h-[7px] w-px bg-[#555]"></span><span class="h-[7px] w-px bg-[#555]"></span></div>
            <div class="flex-[30]"></div>
            <div class="flex w-[18px] justify-center"><svg class="h-[7px] w-1" viewBox="0 0 4 7"><path d="M0 0v7l4-3.500z" fill="#333"/></svg></div>
          </div>
        </div>
        <div class="flex min-w-0 flex-1 flex-col gap-[7px] pt-1 pr-1.5 pb-[5px] pl-px">
          <div class="flex min-h-0 flex-1 border border-[#dde3ee] bg-[#ffffcf]">
            <textarea aria-label="Note content" class="min-w-0 flex-1 resize-none px-1 py-0.5 outline-none">Coffee class rich note</textarea>
            <div class="flex w-4 flex-col items-center justify-between bg-[#f1f1f1] py-2"><svg class="h-1 w-[7px] opacity-70"><use href="#i-au"/></svg><svg class="h-1 w-[7px] opacity-70"><use href="#i-ad"/></svg></div>
          </div>
          <button class="h-[23px] shrink-0 rounded-[3px] border border-[#707070] bg-linear-to-b from-[#f2f2f2] from-50% via-[#dddddd] via-50% to-[#cfcfcf] leading-5">Open editor</button>
        </div>
      </div>
    </section>

    <section class="flex min-h-0 flex-col rounded-t-[7px] border border-[#a0a0a0]">
      <header class="flex h-[23px] shrink-0">
        <div class="flex items-center rounded-tl-[7px] bg-linear-to-b from-white to-[#f2f2f2] pl-[3px]">
          <svg class="size-4"><use href="#i-element"/></svg>
          <h2 class="w-[54px] pl-1">Element</h2>
          <button aria-label="Close Element" class="relative z-10"><svg class="size-3"><use href="#i-close"/></svg></button>
        </div>
        <svg class="-mt-px -ml-2 h-6 w-10 shrink-0" preserveAspectRatio="none"><use href="#c-w"/></svg>
        <div class="flex flex-1 items-start justify-end border-b border-[#a0a0a0] pt-1 pr-1.5">
          <button aria-label="Add stereotype" class="mr-[7px]"><svg class="size-4"><use href="#i-stereo"/></svg></button>
          <button aria-label="Remove" class="mr-[9px]"><svg class="size-[14px]"><use href="#i-delg"/></svg></button>
          <button aria-label="Move up" class="mr-[9px]"><svg class="h-[15px] w-[14px]"><use href="#i-upg"/></svg></button>
          <button aria-label="Move down" class="mr-[9px]"><svg class="h-[15px] w-[14px]"><use href="#i-downg"/></svg></button>
          <button aria-label="View menu" class="mr-[9px]"><svg class="size-2.5"><use href="#i-menu"/></svg></button>
          <button aria-label="Minimize" class="mr-2"><svg class="size-2.5"><use href="#i-min"/></svg></button>
          <button aria-label="Maximize"><svg class="size-2.5"><use href="#i-max"/></svg></button>
        </div>
      </header>
      <div class="flex min-h-0 flex-1 gap-[3px] p-0.5">
        <ul class="w-[104px] shrink-0 overflow-hidden border border-[#828790] bg-white pt-px pl-[22px]">
          <li class="flex h-[18px] items-center"><svg class="h-[15px] w-4 shrink-0"><use href="#i-class"/></svg><span class="pl-[5px]">UML</span></li>
          <li class="flex h-[18px] items-center"><svg class="h-[13px] w-[15px] shrink-0"><use href="#i-table"/></svg><span class="pl-1">Extensions</span></li>
        </ul>
        <div class="flex min-w-0 flex-1 border border-[#828790] bg-white p-px">
          <div class="min-w-0 flex-1 overflow-hidden">
            <table class="w-full table-fixed border-separate border-spacing-0">
              <thead><tr class="bg-[#f0f0f0]">
                <th class="h-[23px] w-[52%] border-t border-r-2 border-b-2 border-l border-[#777] p-0 font-normal">Class</th>
                <th class="h-[23px] border-t border-r-2 border-b-2 border-[#777] p-0 font-normal">Value</th></tr></thead>
              <tbody class="[&>tr]:h-[18px] [&>tr:nth-child(odd)]:bg-[#e6efff] [&>tr:nth-child(even)]:bg-[#f4ffff] [&_td]:border-r [&_td]:border-r-[#ececec] [&_td]:p-0 [&_td]:text-center [&_td]:leading-[18px] [&_td]:text-[#00008b] [&_th]:border-r [&_th]:border-r-[#ececec] [&_th]:p-0 [&_th]:pr-0.5 [&_th]:text-right [&_th]:font-normal">
                <tr><th scope="row">Name</th><td>Coffee</td></tr>
                <tr><th scope="row">Visibility</th><td>Public</td></tr>
                <tr><th scope="row"><label for="p1">Abstract</label></th><td><input id="p1" type="checkbox" class="mx-auto block size-[13px] appearance-none border border-[#5f6b52]"></td></tr>
                <tr><th scope="row"><label for="p2">Primitive</label></th><td><input id="p2" type="checkbox" class="mx-auto block size-[13px] appearance-none border border-[#5f6b52]"></td></tr>
                <tr><th scope="row"><label for="p3">Active</label></th><td><input id="p3" type="checkbox" class="mx-auto block size-[13px] appearance-none border border-[#5f6b52]"></td></tr>
                <tr><th scope="row"><label for="p4">Can be inherited</label></th><td><div class="mx-auto grid size-[13px]"><input id="p4" type="checkbox" checked class="col-start-1 row-start-1 block size-[13px] appearance-none border border-[#5f6b52]"><svg class="pointer-events-none col-start-1 row-start-1 size-[13px]" viewBox="0 0 13 13"><path d="M2.500 6.500L5 9.500 10.500 3" fill="none" stroke="#00008b" stroke-width="2"/></svg></div></td></tr>
                <tr><th scope="row"><label for="p5">Root</label></th><td><input id="p5" type="checkbox" class="mx-auto block size-[13px] appearance-none border border-[#5f6b52]"></td></tr>
                <tr><th scope="row"><label for="p6">Main</label></th><td><input id="p6" type="checkbox" class="mx-auto block size-[13px] appearance-none border border-[#5f6b52]"></td></tr>
              </tbody>
            </table>
          </div>
          <div class="ml-0.5 flex w-4 flex-col items-center bg-[#f1f1f1]">
            <div class="flex h-[17px] items-center"><svg class="h-1 w-[7px]"><use href="#i-au"/></svg></div>
            <div class="flex w-[15px] flex-[103] items-center justify-center rounded-[2px] border border-[#979797] bg-linear-to-r from-[#f6f6f6] via-[#e6e6e6] to-[#c4c4c8]"><span class="h-[7px] w-2 border-y border-[#666] bg-[linear-gradient(#e6e6e6_1px,#666_1px,#666_2px,#e6e6e6_2px,#e6e6e6_3px,#666_3px,#666_4px,#e6e6e6_4px)]"></span></div>
            <div class="flex-[19]"></div>
            <div class="flex h-[17px] items-center"><svg class="h-1 w-[7px]"><use href="#i-ad"/></svg></div>
          </div>
        </div>
      </div>
    </section>
  </div>

  <!-- Editor area -->
  <section class="flex min-h-0 min-w-0 flex-col rounded-t-[7px] border border-[#a0a0a0]">
    <header class="flex h-[23px] shrink-0">
      <div class="flex w-[138px] items-center border-b border-[#a0a0a0] pl-[3px]"><svg class="size-4"><use href="#i-diag"/></svg><span class="pl-1">VendingMachine</span></div>
      <div class="flex items-center rounded-tl-[7px] border-l border-[#a0a0a0] bg-linear-to-b from-[#dbe4ef] to-[#99b4d1] pl-[3px]">
        <svg class="size-4"><use href="#i-word"/></svg>
        <span class="w-[142px] pl-1 whitespace-nowrap">*Rich Note [Description]</span>
        <button aria-label="Close Rich Note" class="relative z-10"><svg class="size-3"><use href="#i-close"/></svg></button>
      </div>
      <svg class="-mt-px -ml-2 h-6 w-10 shrink-0" viewBox="0 0 40 24" preserveAspectRatio="none"><path d="M0 .5C13 .5 16 8 23 15s8 8.500 17 8.500V24H0z" fill="url(#gtb)"/><path d="M0 .5C13 .5 16 8 23 15s8 8.500 17 8.500" fill="none" stroke="#a0a0a0"/></svg>
      <div class="flex flex-1 items-start justify-end border-b border-[#a0a0a0] pt-1 pr-1.5">
        <button aria-label="Minimize" class="mr-2"><svg class="size-2.5"><use href="#i-min"/></svg></button>
        <button aria-label="Maximize"><svg class="size-2.5"><use href="#i-max"/></svg></button>
      </div>
    </header>

    <div class="flex min-h-0 flex-1 flex-col border-2 border-[#99b4d1]">
      <div class="flex min-h-0 flex-1 flex-col border-t border-[#3a5a8a] bg-[#bfdbff] text-[#15428b]">

        <div class="flex h-8 shrink-0 items-center border-b border-[#a5c7ee] bg-[linear-gradient(#e3efff_0,#dce9fb_8px,#cbdef8_9px,#dcebfd_31px)] pt-2 pl-9">
          <svg class="h-[21px] w-4 shrink-0" viewBox="0 0 16 21" preserveAspectRatio="none"><path d="M0 .5c8 1 10 9 11 20H16V.500z" fill="#cddcf0"/><path d="M0 .5h16M0 .5c8 1 10 9 11 20h5" fill="none" stroke="#a3bcdf"/></svg>
          <div class="flex h-[21px] w-[82px] items-center rounded-r-full border border-l-0 border-[#a3bcdf] bg-linear-to-b from-[#c8d9ef] to-[#d8e5f6]">
            <button aria-label="Save" class="mr-2"><svg class="size-[14px]"><use href="#i-qsave"/></svg></button>
            <button aria-label="Undo" class="mr-1"><svg class="size-[14px]"><use href="#i-qundo"/></svg></button>
            <button aria-label="Undo history" class="mr-2.5"><svg class="h-1 w-[5px] opacity-50" viewBox="0 0 6 4"><use href="#i-dd"/></svg></button>
            <button aria-label="Repeat"><svg class="size-[14px]"><use href="#i-qredo"/></svg></button>
          </div>
          <button aria-label="Customize" class="ml-[7px]"><svg class="h-[7px] w-[7px]" viewBox="0 0 7 7"><path d="M0 .5h7" stroke="#15428b"/><path d="M0 3h7L3.500 6.500z" fill="#15428b"/></svg></button>
        </div>

        <nav class="flex h-[25px] shrink-0 items-end gap-[5px] pr-[3px] pl-12">
          <button class="h-[23px] rounded-t-[3px] border border-b-0 border-[#8db2e3] bg-linear-to-b from-white to-[#e3effd] px-1.5">Home</button>
          <button class="h-[22px] px-1">Insert</button>
          <button class="h-[22px] px-1 whitespace-nowrap">Page Layout</button>
          <button class="h-[22px] px-1">References</button>
          <button class="h-[22px] px-1">Mailings</button>
          <button class="h-[22px] px-1">Review</button>
          <button class="h-[22px] px-1">View</button>
          <button class="h-[22px] px-1">Developer</button>
          <button aria-label="Help" class="mb-1 ml-auto shrink-0"><svg class="size-[15px]"><use href="#i-help"/></svg></button>
        </nav>

        <div class="mx-px flex h-[91px] shrink-0 gap-[3px] rounded-[3px] border border-[#8db2e3] bg-linear-to-b from-[#dbe8f8] via-[#c7daf0] via-20% to-[#e6f7ff] p-0.5">

          <div class="flex w-[75px] flex-col rounded-[3px] border border-[#9ebfdb]">
            <div class="flex flex-1">
              <button class="flex w-[50px] flex-col items-center pt-[3px]"><svg class="h-[31px] w-[26px]"><use href="#i-paste"/></svg><span class="mt-1 leading-4">Paste</span><svg class="mt-0.5 h-1 w-1.5"><use href="#i-dd"/></svg></button>
              <div class="flex flex-col gap-[7px] pt-1">
                <button aria-label="Cut"><svg class="h-[15px] w-[14px]"><use href="#i-cut"/></svg></button>
                <button aria-label="Copy"><svg class="h-[13px] w-[15px]"><use href="#i-copy"/></svg></button>
                <button aria-label="Format painter"><svg class="h-[15px] w-4"><use href="#i-brush"/></svg></button>
              </div>
            </div>
            <div class="flex h-4 items-center justify-between bg-[#c1d9f1] pr-1 pl-0.5 leading-4 text-[#3e6db5]"><span>Clipboard</span><svg class="size-2"><use href="#i-launch"/></svg></div>
          </div>

          <div class="flex w-[189px] flex-col rounded-[3px] border border-[#9ebfdb]">
            <div class="flex flex-1 flex-col gap-px pt-0.5 pl-[3px]">
              <div class="flex h-[21px]">
                <div class="flex w-[138px] items-center border border-[#abc1de] bg-[#eaf2fb] pr-1"><input aria-label="Font name" value="Calibri (Body)" class="min-w-0 flex-1 pl-0.5 text-black outline-none"><svg class="h-1 w-1.5"><use href="#i-dd"/></svg></div>
                <div class="-ml-px flex w-[43px] items-center border border-[#abc1de] bg-[#eaf2fb] pr-1"><input aria-label="Font size" value="11" class="min-w-0 flex-1 pl-0.5 text-black outline-none"><svg class="h-1 w-1.5"><use href="#i-dd"/></svg></div>
              </div>
              <div class="flex h-[21px] justify-between pr-0.5">
                <div class="flex w-[154px] items-center justify-around rounded-[2px] border border-[#93b3dc] bg-[#cfdff2] font-['Liberation_Serif',serif] text-[14px] text-black">
                  <button class="font-bold">B</button><button class="font-bold italic">I</button><button class="flex items-center gap-2 font-bold"><span class="underline">U</span><svg class="h-1 w-1.5"><use href="#i-dd"/></svg></button><button class="text-[13px] font-bold text-[#444] line-through">abc</button><button class="font-bold">x<sub class="text-[8px] text-[#2a60c8]">2</sub></button><button class="font-bold">x<sup class="text-[8px] text-[#2a60c8]">2</sup></button>
                </div>
                <button aria-label="Clear formatting" class="flex w-6 items-center justify-center rounded-[2px] border border-[#93b3dc] bg-[#cfdff2]"><svg class="h-[17px] w-[18px]"><use href="#i-eraser"/></svg></button>
              </div>
              <div class="flex h-[21px] gap-1">
                <div class="flex w-24 items-center justify-between rounded-[2px] border border-[#93b3dc] bg-[#cfdff2] px-[3px] text-black">
                  <button aria-label="Highlight" class="grid"><svg class="col-start-1 row-start-1 h-[18px] w-[18px]"><use href="#i-hl"/></svg><span class="col-start-1 row-start-1 text-left text-[10px] leading-[11px]">ab</span></button><svg class="h-1 w-1.5"><use href="#i-dd"/></svg>
                  <button class="border-b-4 border-red-600 px-0.5 font-['Liberation_Serif',serif] text-[16px] leading-[13px] font-bold text-[#2c4f94]">A</button><svg class="h-1 w-1.5"><use href="#i-dd"/></svg>
                  <button class="font-['Liberation_Serif',serif] text-[14px] font-bold text-[#333]">Aa</button><svg class="h-1 w-1.5"><use href="#i-dd"/></svg>
                </div>
                <div class="flex w-[45px] items-center justify-around rounded-[2px] border border-[#93b3dc] bg-[#cfdff2] font-['Liberation_Serif',serif] font-bold text-[#333]">
                  <button aria-label="Grow font" class="flex text-[16px]">A<svg class="mt-0.5 h-1 w-[5px]" viewBox="0 0 5 4"><path d="M0 3.500L2.500 0 5 3.500z" fill="#2a4fa8"/></svg></button><button aria-label="Shrink font" class="flex text-[13px]">A<svg class="mt-0.5 h-1 w-[5px]" viewBox="0 0 5 4"><path d="M0 0h5L2.500 3.500z" fill="#2a4fa8"/></svg></button>
                </div>
              </div>
            </div>
            <div class="flex h-4 items-center bg-[#c1d9f1] pr-1 leading-4 text-[#3e6db5]"><span class="flex-1 pr-2 text-center">Font</span><svg class="size-2"><use href="#i-launch"/></svg></div>
          </div>

          <div class="flex w-[156px] flex-col rounded-[3px] border border-[#9ebfdb]">
            <div class="flex flex-1 flex-col gap-px pt-0.5 pl-[3px] [&_div]:rounded-[2px]">
              <div class="flex h-[21px] gap-1">
                <div class="flex w-[99px] items-center justify-between border border-[#93b3dc] bg-[#cfdff2] px-1">
                  <button aria-label="Bullets"><svg class="size-[14px]"><use href="#i-bul"/></svg></button><svg class="h-1 w-1.5"><use href="#i-dd"/></svg>
                  <button aria-label="Numbering"><svg class="size-[14px]"><use href="#i-num"/></svg></button><svg class="h-1 w-1.5"><use href="#i-dd"/></svg>
                  <button aria-label="Multilevel list"><svg class="h-[15px] w-[17px]"><use href="#i-multi"/></svg></button><svg class="h-1 w-1.5"><use href="#i-dd"/></svg>
                </div>
                <div class="flex w-[45px] items-center justify-around border border-[#93b3dc] bg-[#cfdff2]">
                  <button aria-label="Decrease indent"><svg class="h-[14px] w-4"><use href="#i-outd"/></svg></button><button aria-label="Increase indent"><svg class="h-[14px] w-4"><use href="#i-ind"/></svg></button>
                </div>
              </div>
              <div class="flex h-[21px] gap-1">
                <div class="flex w-[93px] border border-[#93b3dc] bg-[#cfdff2] [&>button]:flex [&>button]:flex-1 [&>button]:items-center [&>button]:justify-center">
                  <button aria-label="Align left" class="bg-linear-to-b from-[#fbc27a] to-[#ffe79a]"><svg class="h-3 w-[14px]"><use href="#i-al"/></svg></button><button aria-label="Center"><svg class="h-3 w-[14px]"><use href="#i-ac"/></svg></button><button aria-label="Align right"><svg class="h-3 w-[14px]"><use href="#i-ar"/></svg></button><button aria-label="Justify"><svg class="h-3 w-[14px]"><use href="#i-aj"/></svg></button>
                </div>
                <div class="flex w-[31px] items-center justify-around border border-[#93b3dc] bg-[#cfdff2]"><button aria-label="Line spacing"><svg class="h-4 w-[15px]"><use href="#i-ls"/></svg></button><svg class="h-1 w-1.5"><use href="#i-dd"/></svg></div>
              </div>
              <div class="flex h-[21px] gap-1">
                <div class="flex w-[67px] items-center justify-between border border-[#93b3dc] bg-[#cfdff2] px-[3px]">
                  <button aria-label="Shading"><svg class="h-[15px] w-4"><use href="#i-fill"/></svg></button><svg class="h-1 w-1.5"><use href="#i-dd"/></svg>
                  <button aria-label="Borders"><svg class="size-[14px]"><use href="#i-border"/></svg></button><svg class="h-1 w-1.5"><use href="#i-dd"/></svg>
                </div>
                <div class="flex w-[23px] items-center justify-center border border-[#93b3dc] bg-[#cfdff2]"><button aria-label="Sort"><svg class="h-4 w-[15px]"><use href="#i-sort"/></svg></button></div>
                <div class="flex w-6 items-center justify-center border border-[#93b3dc] bg-[#cfdff2]"><button class="text-[14px] font-bold text-[#333]">¶</button></div>
              </div>
            </div>
            <div class="flex h-4 items-center bg-[#c1d9f1] pr-1 leading-4 text-[#3e6db5]"><span class="flex-1 pr-2 text-center">Paragraph</span><svg class="size-2"><use href="#i-launch"/></svg></div>
          </div>

          <button class="flex w-[41px] flex-col items-center justify-start rounded-[3px] border border-[#9ebfdb] pt-[3px]"><span class="flex h-[31px] w-[31px] items-center justify-center rounded-[3px] border border-[#a9c3e4] bg-linear-to-b from-[#dfeafa] from-70% to-[#c5d8f0] to-70%"><svg class="h-[17px] w-[18px]"><use href="#i-styles"/></svg></span><span class="mt-1 leading-4">Styles</span><svg class="mt-0.5 h-1 w-1.5"><use href="#i-dd"/></svg></button>
          <button class="flex w-[41px] flex-col items-center justify-start rounded-[3px] border border-[#9ebfdb] pt-[3px]"><span class="flex h-[31px] w-[31px] items-center justify-center rounded-[3px] border border-[#a9c3e4] bg-linear-to-b from-[#dfeafa] from-70% to-[#c5d8f0] to-70%"><svg class="h-[15px] w-4"><use href="#i-bino"/></svg></span><span class="mt-1 leading-4">Editing</span><svg class="mt-0.5 h-1 w-1.5"><use href="#i-dd"/></svg></button>
        </div>

        <div class="flex min-h-0 flex-1 bg-[#a5c3ef]">
          <div class="flex min-h-0 min-w-0 flex-1 flex-col">
            <div class="flex min-h-0 flex-1 bg-linear-to-b from-[#a9c5ea] to-[#5f8ac4] pt-[5px] pl-1">
              <article class="flex-1 overflow-hidden bg-white px-3 pt-[95px] font-['Lato','Open_Sans',sans-serif] text-[14px] text-black [font-variant-ligatures:none]">
                <h2 class="text-[25px] leading-9 font-bold whitespace-nowrap">Description of the Coffee class</h2>
                <p class="mt-4 leading-[18px] whitespace-nowrap">The Coffee class represents one of the elements dispensed by the vending machine.</p>
                <p class="mt-4 leading-[18px]">It belongs to the “Elements dispensed” package.</p>
                <div class="mt-4 h-[18px] border-l-2 border-black"></div>
              </article>
            </div>
            <div class="flex h-[17px] shrink-0 items-center border-t border-[#b7d0f2] bg-[#7a98c2]">
              <div class="flex w-4 justify-center"><svg class="h-2 w-1" viewBox="0 0 4 8"><path d="M4 0v8L0 4z" fill="#2c3c6a"/></svg></div>
              <div class="flex-[62]"></div>
              <div class="flex h-[15px] flex-[310] items-center justify-center gap-px rounded-[2px] border border-[#3f5c94] bg-linear-to-b from-[#eef3f8] from-45% via-[#c9d6e6] via-50% to-[#a9bcd4]"><span class="h-[7px] w-px bg-[#6a7688]"></span><span class="h-[7px] w-px bg-[#6a7688]"></span><span class="h-[7px] w-px bg-[#6a7688]"></span><span class="h-[7px] w-px bg-[#6a7688]"></span></div>
              <div class="flex-[132]"></div>
              <div class="flex w-4 justify-center"><svg class="h-2 w-1" viewBox="0 0 4 8"><path d="M0 0v8l4-4z" fill="#2c3c6a"/></svg></div>
            </div>
          </div>
          <div class="flex w-[17px] shrink-0 flex-col items-center">
            <span class="mt-[3px] h-0.5 w-[9px] bg-[#3c4a70]"></span>
            <button aria-label="Ruler" class="mt-1"><svg class="size-3" viewBox="0 0 12 12"><path d="M.5 2.500h2v-2h3v2h6v5h-1v4h-3v-3h-7z" fill="#fff" stroke="#555"/><path d="M4.500 4v1M7.500 5v1M9.500 8v1" stroke="#333"/></svg></button>
            <div class="mt-[3px] flex min-h-0 w-[15px] flex-1 flex-col items-center bg-[#7a98c2]">
              <div class="flex h-6 items-center"><svg class="h-[5px] w-[9px]" viewBox="0 0 9 5"><path d="M0 5l4.500-5L9 5z" fill="#3d4d78"/></svg></div>
              <div class="flex w-[15px] flex-[247] flex-col items-center justify-center gap-px rounded-[2px] border border-[#3f5c94] bg-linear-to-r from-[#eef3f8] from-30% via-[#c9d6e6] via-60% to-[#a9bcd4]"><span class="h-px w-2 bg-[#6a7688]"></span><span class="h-px w-2 bg-[#6a7688]"></span><span class="h-px w-2 bg-[#6a7688]"></span><span class="h-px w-2 bg-[#6a7688]"></span></div>
              <div class="flex-[215]"></div>
              <div class="flex h-4 items-center"><svg class="h-[5px] w-[9px]" viewBox="0 0 9 5"><path d="M0 0h9L4.500 5z" fill="#3d4d78"/></svg></div>
            </div>
            <div class="flex h-[69px] flex-col items-center justify-start gap-2.5 pt-[5px]">
              <svg class="h-[7px] w-[7px]" viewBox="0 0 7 7"><path d="M3.500 0L6 3H1zM3.500 3L7 6H0z"/><path d="M1 6.500h5" stroke="#000"/></svg>
              <svg class="h-[7px] w-[7px]" viewBox="0 0 7 7"><circle cx="3.500" cy="3.500" r="2.900" fill="#ddd" stroke="#000"/></svg>
              <svg class="h-[7px] w-[7px]" viewBox="0 0 7 7"><path d="M1 .5h5" stroke="#000"/><path d="M3.500 4L6 1H1zM3.500 7L6.500 4H.500z"/></svg>
            </div>
          </div>
        </div>
      </div>
    </div>
  </section>
</main>
<div class="mt-1 ml-[3px] w-px bg-[#a0a0a0]"></div>
</div>
</body>
</html>
